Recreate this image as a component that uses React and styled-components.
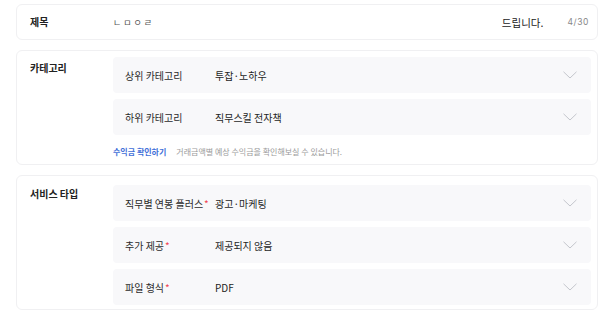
import React from 'react';
import styled, { createGlobalStyle } from 'styled-components';

const GlobalStyle = createGlobalStyle`
  html, body {
    margin: 0;
    padding: 0;
    background: #ffffff;
  }
  body {
    font-family: "Noto Sans CJK KR", "Noto Sans", sans-serif;
    color: #222;
  }
`;

const Page = styled.div`
  display: flex;
  flex-direction: column;
  gap: 10px;
  padding: 4px 2px 0 16px;
  height: 310px;
  overflow: hidden;
  box-sizing: border-box;
`;

const Card = styled.section`
  display: flex;
  align-items: ${p => (p.$center ? 'center' : 'flex-start')};
  border: 1px solid #f0f0f2;
  border-radius: 6px;
  padding: ${p => p.$pt || 0}px 6px ${p => p.$pb || 0}px 13px;
  min-height: ${p => p.$h || 0}px;
  box-sizing: border-box;
  background: #fff;
`;

const SectionLabel = styled.div`
  width: 83px;
  flex-shrink: 0;
  font-size: 10px;
  font-weight: 700;
  line-height: 1;
  color: #222;
  margin-top: ${p => p.$mt || 0}px;
`;

const Body = styled.div`
  flex: 1;
  display: flex;
  flex-direction: column;
  gap: 6px;
`;

const TitleRow = styled.div`
  flex: 1;
  display: flex;
  align-items: center;
  padding-right: 2px;
`;

const TitleInput = styled.div`
  flex: 1;
  font-size: 9px;
  letter-spacing: 2px;
  color: #555;
`;

const TitleSuffix = styled.span`
  font-size: 10.5px;
  color: #222;
  margin-right: 24px;
`;

const Counter = styled.span`
  font-size: 8.5px;
  color: #888;
  letter-spacing: 0.6px;
  font-family: "Inter", "Noto Sans", sans-serif;
`;

const Field = styled.div`
  display: flex;
  align-items: center;
  height: 36px;
  background: #f8f8fa;
  border-radius: 4px;
  padding: 0 14px 0 12px;
  font-size: 10px;
`;

const FieldLabel = styled.span`
  width: 90px;
  flex-shrink: 0;
  color: #2a2a2a;
`;

const Required = styled.span`
  color: #f04452;
  margin-left: 1px;
`;

const FieldValue = styled.span`
  flex: 1;
  color: #1e1e1e;
`;

const Chevron = () => (
  <svg width="14" height="8" viewBox="0 0 14 8" fill="none">
    <path d="M0.5 0.8 L7 7 L13.5 0.8" stroke="#c4c6cc" strokeWidth="1" />
  </svg>
);

const HintRow = styled.div`
  display: flex;
  align-items: center;
  gap: 10px;
  height: 20px;
  font-size: 8px;
`;

const HintLink = styled.a`
  color: #3f6fd8;
  font-weight: 700;
  text-decoration: none;
`;

const HintText = styled.span`
  color: #9a9a9a;
`;

const SelectField = ({ label, value, required }) => (
  <Field>
    <FieldLabel>
      {label}
      {required && <Required>*</Required>}
    </FieldLabel>
    <FieldValue>{value}</FieldValue>
    <Chevron />
  </Field>
);

export default function App() {
  return (
    <>
      <GlobalStyle />
      <Page>
        <Card $center $h={36}>
          <SectionLabel>제목</SectionLabel>
          <TitleRow>
            <TitleInput>ㄴㅁㅇㄹ</TitleInput>
            <TitleSuffix>드립니다.</TitleSuffix>
            <Counter>4/30</Counter>
          </TitleRow>
        </Card>

        <Card $pt={6} $pb={7}>
          <SectionLabel $mt={6}>카테고리</SectionLabel>
          <Body>
            <SelectField label="상위 카테고리" value="투잡·노하우" />
            <SelectField label="하위 카테고리" value="직무스킬 전자책" />
            <HintRow>
              <HintLink>수익금 확인하기</HintLink>
              <HintText>거래금액별 예상 수익금을 확인해보실 수 있습니다.</HintText>
            </HintRow>
          </Body>
        </Card>

        <Card $pt={9} $pb={8}>
          <SectionLabel $mt={4}>서비스 타입</SectionLabel>
          <Body>
            <SelectField label="직무별 연봉 플러스" value="광고·마케팅" required />
            <SelectField label="추가 제공" value="제공되지 않음" required />
            <SelectField label="파일 형식" value="PDF" required />
          </Body>
        </Card>
      </Page>
    </>
  );
}
